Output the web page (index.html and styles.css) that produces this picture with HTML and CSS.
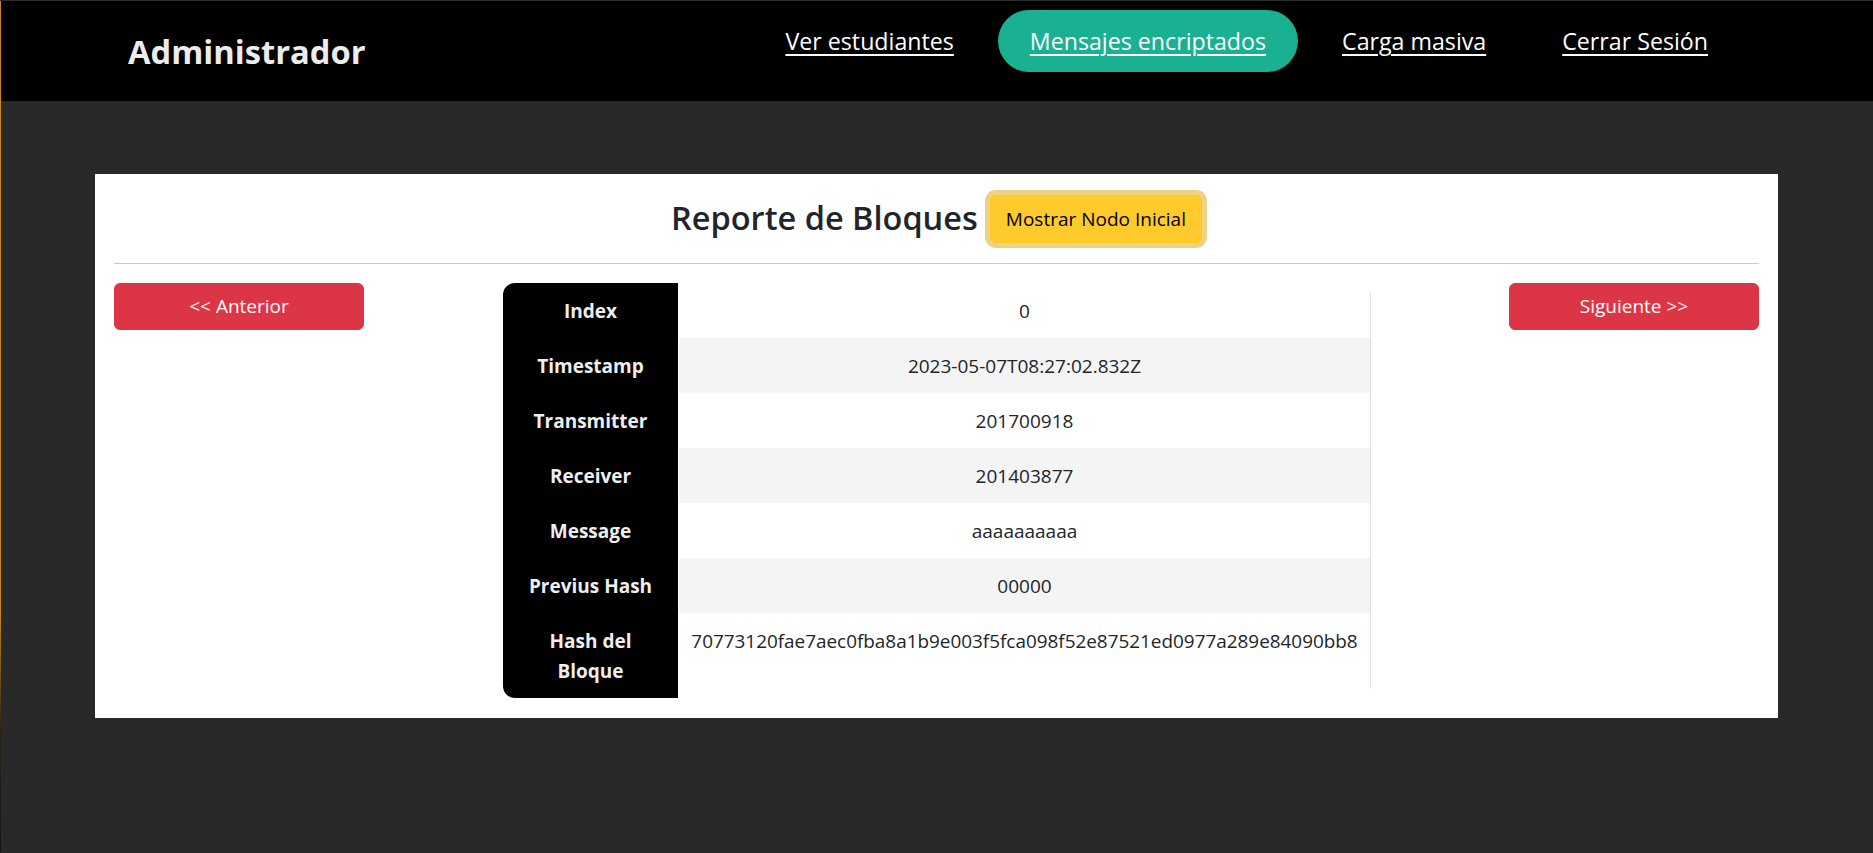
FILE: index.html
```html
<!DOCTYPE html>
<html lang="es">
<head>
<meta charset="utf-8">
<title>Administrador - Reporte de Bloques</title>
<link rel="stylesheet" href="styles.css">
</head>
<body>
<header class="topbar">
  <div class="brand">Administrador</div>
  <nav class="nav">
    <a class="nav-link" href="#">Ver estudiantes</a>
    <a class="nav-link active" href="#">Mensajes encriptados</a>
    <a class="nav-link" href="#">Carga masiva</a>
    <a class="nav-link" href="#">Cerrar Sesión</a>
  </nav>
</header>
<main class="card">
  <div class="title-row">
    <h2 class="title">Reporte de Bloques</h2>
    <button class="btn btn-warning">Mostrar Nodo Inicial</button>
  </div>
  <hr class="divider">
  <div class="content-row">
    <div class="side side-left"><button class="btn btn-danger">&lt;&lt; Anterior</button></div>
    <div class="table-wrap">
      <table class="block-table">
        <tr><th>Index</th><td>0</td></tr>
        <tr><th>Timestamp</th><td>2023-05-07T08:27:02.832Z</td></tr>
        <tr><th>Transmitter</th><td>201700918</td></tr>
        <tr><th>Receiver</th><td>201403877</td></tr>
        <tr><th>Message</th><td>aaaaaaaaaa</td></tr>
        <tr><th>Previus Hash</th><td>00000</td></tr>
        <tr><th>Hash del Bloque</th><td class="hash">70773120fae7aec0fba8a1b9e003f5fca098f52e87521ed0977a289e84090bb8</td></tr>
      </table>
    </div>
    <div class="side side-right"><button class="btn btn-danger">Siguiente &gt;&gt;</button></div>
  </div>
</main>
</body>
</html>
```
FILE: styles.css
```css
* { box-sizing: border-box; }

html, body { min-height: 100%; }

html { background: #292929; }

body {
  margin: 0;
  min-height: 852px;
  border-top: 1px solid #2c2c2c;
  padding-left: 1px;
  background:
    linear-gradient(to bottom, #c8871a 0%, #c8871a 72%, #2a2216 86%, #141414 100%) left top / 1px 100% no-repeat,
    #292929;
  font-family: "Open Sans", "Noto Sans", sans-serif;
  color: #212529;
}

.topbar {
  height: 100px;
  background: #000;
  display: flex;
  justify-content: space-between;
  align-items: flex-start;
  padding: 0 133px 0 127px;
}

.brand {
  align-self: center;
  color: #ececec;
  font-weight: 700;
  font-size: 32.7px;
  line-height: 1;
  padding-top: 2px;
}

.nav {
  display: flex;
  gap: 12px;
  margin-top: 9px;
}

.nav-link {
  display: flex;
  align-items: center;
  height: 62px;
  padding: 0 32px;
  border-radius: 31px;
  color: #fff;
  font-size: 23.2px;
  text-decoration: underline;
  text-decoration-thickness: 2px;
  text-underline-offset: 4px;
}

.nav-link.active { background: #1ab092; }

.card {
  background: #fff;
  margin: 73px 95px 0 94px;
  padding: 21px 19px 19.5px;
}

.title-row {
  display: flex;
  justify-content: center;
  align-items: center;
  gap: 12px;
}

.title {
  margin: 0;
  font-size: 32.5px;
  font-weight: 600;
  line-height: 1.2;
  color: #212529;
  padding-bottom: 4px;
}

.btn {
  font-family: inherit;
  font-size: 19px;
  line-height: 29px;
  padding: 8px 15px;
  border: 1px solid transparent;
  border-radius: 6px;
  cursor: pointer;
}

.btn-warning {
  background: #ffca2c;
  border-color: #ffc720;
  color: #000;
  box-shadow: 0 0 0 5px #ecd282;
  padding-top: 8.5px;
  padding-bottom: 8.5px;
}

.btn-danger {
  width: 250px;
  background: #dc3545;
  border-color: #dc3545;
  color: #fff;
}

.divider {
  margin: 19.5px 0 19.5px;
  border: 0;
  border-top: 1px solid #c9cacb;
}

.content-row {
  display: grid;
  grid-template-columns: 250px 1fr 250px;
  align-items: start;
}

.table-wrap {
  justify-self: center;
  position: relative;
}

.table-wrap::after {
  content: "";
  position: absolute;
  right: -1px;
  top: 9px;
  bottom: 9px;
  width: 1px;
  background: #dfe1e4;
}

.block-table {
  border-collapse: separate;
  border-spacing: 0;
  width: 867px;
  font-size: 19px;
  line-height: 30px;
}

.block-table th {
  width: 175px;
  background: #000;
  color: #eeeeee;
  font-weight: 700;
  padding: 12.5px 22px;
  text-align: center;
  vertical-align: middle;
}

.block-table tr:first-child th { border-top-left-radius: 12px; }
.block-table tr:last-child th { border-bottom-left-radius: 12px; }

.block-table td {
  padding: 13px 8px 12px;
  text-align: center;
  vertical-align: top;
  border-left: 1px solid #fff;
  color: #212529;
}

.block-table td.hash { font-size: 18.9px; }

.block-table tr:nth-child(even) td { background: #f4f4f4; }
```
